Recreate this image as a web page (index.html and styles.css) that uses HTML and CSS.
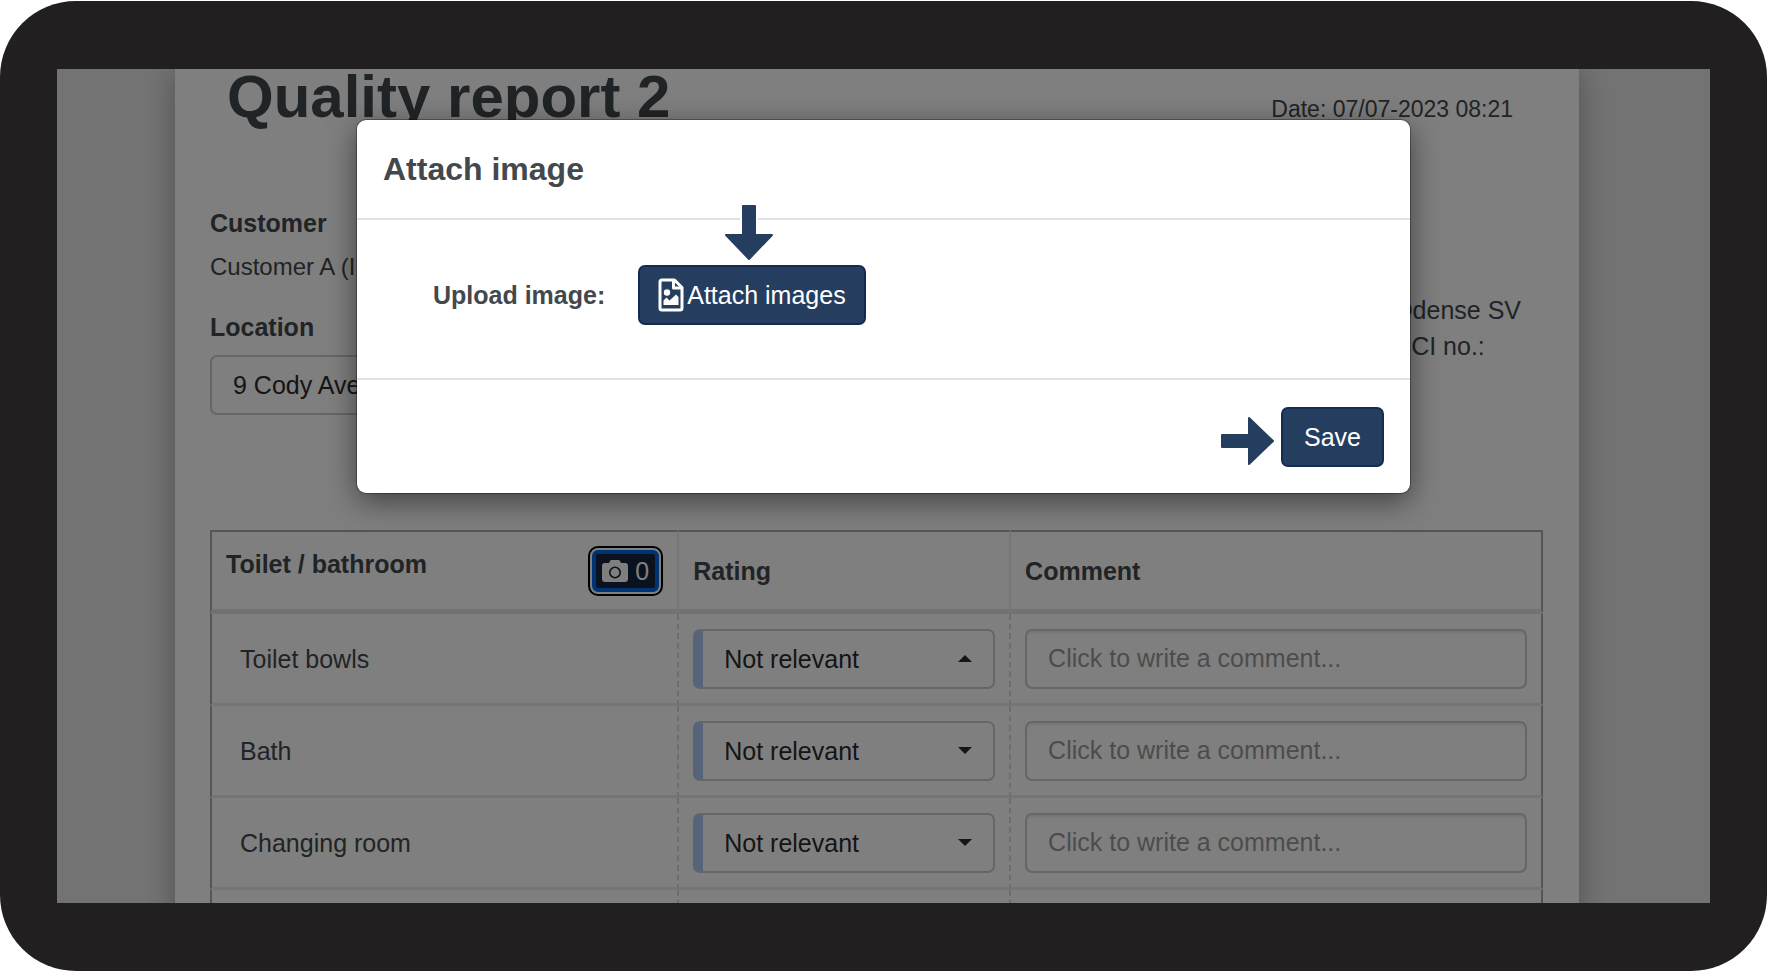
FILE: index.html
```html
<!DOCTYPE html>
<html lang="en">
<head>
<meta charset="utf-8">
<title>Quality report 2</title>
<link rel="stylesheet" href="styles.css">
</head>
<body>
<div class="device">
  <div class="screen">
    <main class="sheet">
      <header class="sheet-header">
        <h1 class="title">Quality report 2</h1>
        <p class="date">Date: 07/07-2023 08:21</p>
      </header>

      <section class="info">
        <div class="info-left">
          <h2 class="label">Customer</h2>
          <p class="customer">Customer A (I</p>
          <label class="label" for="location">Location</label>
          <select class="control location" id="location"><option>9 Cody Avenue</option></select>
        </div>
        <address class="company">
          <span>Odense SV</span>
          <span class="company-ci">CI no.:</span>
        </address>
      </section>

      <table class="ratings">
        <thead>
          <tr>
            <th class="col-area">
              <div class="area-head">
                <span>Toilet / bathroom</span>
                <button class="photo-button" type="button" aria-label="Images: 0">
                  <svg class="camera" viewBox="0 0 26 22" aria-hidden="true"><path fill-rule="evenodd" d="M3 3h4l1-2q.5-1 1.500-1h7q1 0 1.500 1l1 2h4q3 0 3 3v13q0 3-3 3H3q-3 0-3-3V6q0-3 3-3zM13 6.500a6 6 0 1 0 0 12 6 6 0 0 0 0-12zm0 1.600a4.400 4.400 0 1 1 0 8.800 4.400 4.400 0 0 1 0-8.800z"/></svg>
                  <span>0</span>
                </button>
              </div>
            </th>
            <th class="col-rating">Rating</th>
            <th class="col-comment">Comment</th>
          </tr>
        </thead>
        <tbody>
          <tr>
            <td class="area">Toilet bowls</td>
            <td><div class="rating"><select class="control" aria-label="Rating for toilet bowls"><option>Not relevant</option></select><svg class="caret" viewBox="0 0 14 7" aria-hidden="true"><path d="M0 7L7 0l7 7z"/></svg></div></td>
            <td><input class="control comment" type="text" aria-label="Comment for toilet bowls" placeholder="Click to write a comment..."></td>
          </tr>
          <tr>
            <td class="area">Bath</td>
            <td><div class="rating"><select class="control" aria-label="Rating for bath"><option>Not relevant</option></select><svg class="caret" viewBox="0 0 14 7" aria-hidden="true"><path d="M0 0h14L7 7z"/></svg></div></td>
            <td><input class="control comment" type="text" aria-label="Comment for bath" placeholder="Click to write a comment..."></td>
          </tr>
          <tr>
            <td class="area">Changing room</td>
            <td><div class="rating"><select class="control" aria-label="Rating for changing room"><option>Not relevant</option></select><svg class="caret" viewBox="0 0 14 7" aria-hidden="true"><path d="M0 0h14L7 7z"/></svg></div></td>
            <td><input class="control comment" type="text" aria-label="Comment for changing room" placeholder="Click to write a comment..."></td>
          </tr>
          <tr>
            <td class="area"></td>
            <td><div class="rating"><select class="control" aria-label="Rating"></select></div></td>
            <td><input class="control comment" type="text" aria-label="Comment"></td>
          </tr>
        </tbody>
      </table>
    </main>

    <div class="backdrop">
      <div class="modal" role="dialog" aria-modal="true" aria-labelledby="modal-title">
        <h2 class="modal-title" id="modal-title">Attach image</h2>
        <div class="modal-body">
          <label class="upload-label" for="attach">Upload image:</label>
          <div class="upload">
            <svg class="arrow-down" viewBox="0 0 50 56" aria-hidden="true"><path class="arrow-halo" d="M19 4h12v20H19z"/><path d="M19 1h12v29h17L25 54 2 30h17z"/></svg>
            <button class="primary attach" id="attach" type="button">
              <svg class="file-icon" viewBox="0 0 26 34" aria-hidden="true"><path class="file-outline" d="M4 2h12.500L24 9.500V30q0 2-2 2H4q-2 0-2-2V4q0-2 2-2z"/><path class="file-outline" d="M15.500 2.500V10H23.500"/><circle cx="9" cy="14.500" r="3.200"/><path d="M5.500 27v-4.500l3-3 3 3 6.500-6 2.500 2.500v8z"/></svg>
              <span>Attach images</span>
            </button>
          </div>
        </div>
        <div class="modal-footer">
          <svg class="arrow-right" viewBox="0 0 56 50" aria-hidden="true"><path d="M2 19h27V2l24 23-24 23V31H2z"/></svg>
          <button class="primary" type="button">Save</button>
        </div>
      </div>
    </div>
  </div>
</div>
</body>
</html>
```
FILE: styles.css
```css
* {
  box-sizing: border-box;
}

body {
  margin: 0;
  padding-top: 1px;
  background: #fff;
  color: #42484c;
  font: 25px/36px "Liberation Sans", Arial, sans-serif;
}

h1, h2, p {
  margin: 0;
}

.device {
  display: flex;
  height: calc(100vh - 1px);
  padding: 68px 57px;
  border-radius: 76px;
  background: #221f20;
}

.screen {
  position: relative;
  flex: 1;
  min-width: 0;
  overflow: hidden;
  background: #e6e7e6;
}

.sheet {
  min-height: 100%;
  margin: 0 131px 0 118px;
  padding: 0 36px 0 35px;
  background: #fff;
  box-shadow: 0 0 30px rgba(0, 0, 0, 0.3);
}

.sheet-header {
  display: flex;
  justify-content: space-between;
  align-items: baseline;
  padding: 0 30px 0 17px;
}

.title {
  font-size: 60px;
  line-height: 56px;
}

.date {
  font-size: 23px;
  line-height: 32px;
}

.info {
  display: flex;
  justify-content: space-between;
  margin-top: 80px;
}

.info-left {
  display: flex;
  flex-direction: column;
  width: 500px;
}

.label {
  font-size: 25px;
  font-weight: bold;
}

.customer {
  margin: 8px 0 24px;
  font-size: 24px;
}

.location {
  margin-top: 10px;
}

.company {
  display: flex;
  flex-direction: column;
  padding: 87px 22px 0 0;
  font-style: normal;
}

.company-ci {
  padding-left: 18px;
}

.control {
  display: block;
  width: 100%;
  height: 60px;
  padding: 0 21px;
  border: 2px solid #ccc;
  border-radius: 7px;
  background: #fff;
  color: #2b2b2b;
  font: inherit;
  appearance: none;
}

.comment {
  box-shadow: inset 0 2px 2px rgba(0, 0, 0, 0.08);
}

.comment::placeholder {
  color: #999;
  opacity: 1;
}

.ratings {
  width: 100%;
  margin-top: 115px;
  border-spacing: 0;
  table-layout: fixed;
}

.ratings th {
  height: 84px;
  padding: 0 14px;
  border-top: 2px solid #aaa;
  border-right: 2px solid #ececec;
  border-bottom: 5px solid #e4e4e4;
  text-align: left;
}

.ratings td {
  height: 92px;
  padding: 0 14px;
  border-right: 2px dashed #dcdcdc;
  border-bottom: 3px solid #ebebeb;
}

.ratings th:first-child,
.ratings td:first-child {
  border-left: 2px solid #aaa;
}

.ratings th:last-child,
.ratings td:last-child {
  border-right: 2px solid #aaa;
}

.ratings .col-area {
  width: 35.2%;
}

.ratings .col-rating {
  width: 24.9%;
}

.ratings .area {
  padding-left: 28px;
}

.area-head {
  display: flex;
  justify-content: space-between;
  align-items: flex-start;
}

.photo-button {
  display: flex;
  align-items: center;
  gap: 7px;
  height: 42px;
  margin: 4px;
  padding: 0 6px;
  border: 4px solid #0066e8;
  border-radius: 6px;
  outline: 2px solid #000;
  box-shadow: 0 0 0 2px #fff;
  outline-offset: 2px;
  background: #14223f;
  color: #fff;
  font: inherit;
  font-weight: normal;
}

.camera {
  width: 26px;
  height: 22px;
  fill: currentColor;
}

.rating {
  display: grid;
  grid-template-columns: 1fr 14px 23px;
  align-items: center;
}

.rating .control {
  grid-area: 1 / 1 / 2 / 4;
  padding-left: 21px;
  border-left: 10px solid #adc6f0;
}

.caret {
  grid-area: 1 / 2;
  width: 14px;
  height: 7px;
  fill: #2b2b2b;
  pointer-events: none;
}

.backdrop {
  position: absolute;
  inset: 0;
  padding: 51px 300px 0;
  background: rgba(0, 0, 0, 0.5);
}

.modal {
  border-radius: 9px;
  background: #fff;
  box-shadow: 0 0 0 1px rgba(0, 0, 0, 0.3), 0 8px 30px rgba(0, 0, 0, 0.5);
}

.modal-title {
  padding: 31px 26px;
  border-bottom: 2px solid #e2e2e2;
  font-size: 32px;
}

.modal-body {
  display: flex;
  align-items: center;
  gap: 33px;
  padding: 45px 76px 53px;
  border-bottom: 2px solid #e2e2e2;
}

.upload-label {
  font-weight: bold;
}

.upload {
  position: relative;
}

.arrow-down,
.arrow-right {
  fill: #253e60;
  stroke: #253e60;
  stroke-width: 2;
  stroke-linejoin: round;
}

.arrow-down {
  position: absolute;
  bottom: calc(100% + 4px);
  left: 86px;
  width: 50px;
  height: 56px;
}

.arrow-down .arrow-halo {
  stroke: #fff;
  stroke-width: 6;
}

.primary {
  display: flex;
  align-items: center;
  gap: 3px;
  height: 60px;
  padding: 0 21px;
  border: 2px solid #142c50;
  border-radius: 7px;
  background: #253e60;
  color: #fff;
  font: inherit;
}

.attach {
  padding: 0 18px;
}

.file-icon {
  width: 26px;
  height: 34px;
  fill: currentColor;
}

.file-outline {
  fill: none;
  stroke: currentColor;
  stroke-width: 3;
  stroke-linejoin: round;
}

.modal-footer {
  display: flex;
  justify-content: flex-end;
  align-items: center;
  gap: 5px;
  padding: 27px 26px 26px;
}

.arrow-right {
  width: 56px;
  height: 50px;
  margin-top: 8px;
}
```
